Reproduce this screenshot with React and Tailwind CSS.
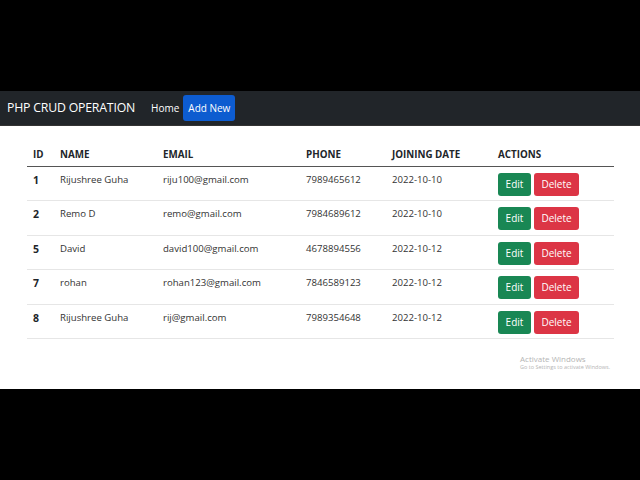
import React from "react";

const rows = [
  ["1", "Rijushree Guha", "riju100@gmail.com", "7989465612", "2022-10-10"],
  ["2", "Remo D", "remo@gmail.com", "7984689612", "2022-10-10"],
  ["5", "David", "david100@gmail.com", "4678894556", "2022-10-12"],
  ["7", "rohan", "rohan123@gmail.com", "7846589123", "2022-10-12"],
  ["8", "Rijushree Guha", "rij@gmail.com", "7989354648", "2022-10-12"],
];

export default function App() {
  return (
    <div className="w-[640px] h-[480px] bg-black flex flex-col" style={{ fontFamily: '"Open Sans", "Noto Sans", sans-serif' }}>
      <div className="h-[91px]" />
      <div className="h-[35px] bg-[#212529] flex items-center border-b border-[#333]">
        <span className="ml-[7px] text-white text-[12.3px] tracking-[-0.2px]">PHP CRUD OPERATION</span>
        <span className="ml-[16px] text-white text-[10px]">Home</span>
        <span className="ml-[4px] h-[26px] w-[52px] flex items-center justify-center rounded-[3px] bg-[#0d5cd0] text-white text-[10px]">Add New</span>
      </div>
      <div className="h-[263px] bg-white relative">
        <div className="ml-[27px] w-[587px] mt-[18px]">
          <div className="flex items-center h-[23px] border-b-[1.5px] border-[#555] text-[9.8px] font-bold text-[#212529]">
            <div className="w-[33px] pl-[6px]">ID</div>
            <div className="w-[103px]">NAME</div>
            <div className="w-[143px]">EMAIL</div>
            <div className="w-[86px]">PHONE</div>
            <div className="w-[106px]">JOINING DATE</div>
            <div>ACTIONS</div>
          </div>
          {rows.map((r) => (
            <div key={r[0] + r[2]} className="flex items-start h-[34.4px] pt-[6px] border-b border-[#e6e6e6] text-[9.6px] text-[#333]">
              <div className="w-[33px] pl-[6px] font-bold text-[10.5px] leading-[14px] text-[#212529]">{r[0]}</div>
              <div className="w-[103px]">{r[1]}</div>
              <div className="w-[143px]">{r[2]}</div>
              <div className="w-[86px]">{r[3]}</div>
              <div className="w-[106px]">{r[4]}</div>
              <div className="flex gap-[3px]">
                <span className="h-[23px] w-[33px] flex items-center justify-center rounded-[3px] bg-[#198754] text-white text-[10px]">Edit</span>
                <span className="h-[23px] w-[45px] flex items-center justify-center rounded-[3px] bg-[#dc3545] text-white text-[10px]">Delete</span>
              </div>
            </div>
          ))}
        </div>
        <div className="absolute left-[520px] top-[229px] text-[#b5b5b5] leading-none">
          <div className="text-[8px]">Activate Windows</div>
          <div className="text-[5.5px] mt-[2px]">Go to Settings to activate Windows.</div>
        </div>
      </div>
    </div>
  );
}
